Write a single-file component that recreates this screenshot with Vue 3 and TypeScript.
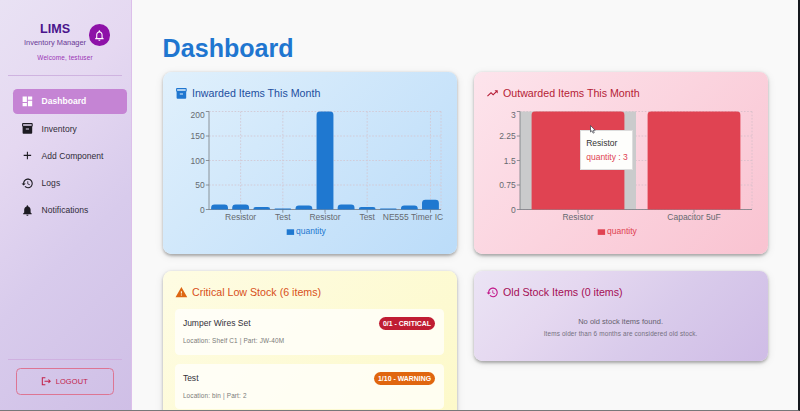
<script setup lang="ts">
interface Bar { name: string; quantity: number; label?: string; labelX?: number }
interface ChartDef {
  id: string
  title: string
  color: string
  grid: string
  max: number
  ticks: number[]
  radius: number
  icon: string
  bars: Bar[]
}

const icons = {
  dashboard: 'M3 13h8V3H3v10zm0 8h8v-6H3v6zm10 0h8V11h-8v10zm0-18v6h8V3h-8z',
  inventory: 'M20 2H4c-1 0-2 .9-2 2v3.01c0 .72.43 1.34 1 1.69V20c0 1.1 1.1 2 2 2h14c.9 0 2-.9 2-2V8.7c.57-.35 1-.97 1-1.69V4c0-1.1-1-2-2-2zm-5 12H9v-2h6v2zm5-7H4V4h16v3z',
  add: 'M19 13h-6v6h-2v-6H5v-2h6V5h2v6h6v2z',
  history: 'M13 3c-4.97 0-9 4.03-9 9H1l3.89 3.89.07.14L9 12H6c0-3.87 3.13-7 7-7s7 3.13 7 7-3.13 7-7 7c-1.93 0-3.68-.79-4.94-2.06l-1.42 1.42C8.27 19.99 10.51 21 13 21c4.97 0 9-4.03 9-9s-4.03-9-9-9zm-1 5v5l4.28 2.54.72-1.21-3.5-2.08V8H12z',
  bell: 'M12 22c1.1 0 2-.9 2-2h-4c0 1.1.89 2 2 2zm6-6v-5c0-3.07-1.64-5.64-4.5-6.32V4c0-.83-.67-1.5-1.5-1.5s-1.5.67-1.5 1.5v.68C7.63 5.36 6 7.92 6 11v5l-2 2v1h16v-1l-2-2z',
  bellOutline: 'M12 22c1.1 0 2-.9 2-2h-4c0 1.1.9 2 2 2zm6-6v-5c0-3.07-1.63-5.64-4.5-6.32V4c0-.83-.67-1.5-1.5-1.5s-1.5.67-1.5 1.5v.68C7.64 5.36 6 7.92 6 11v5l-2 2v1h16v-1l-2-2zm-2 1H8v-6c0-2.48 1.51-4.5 4-4.5s4 2.02 4 4.5v6z',
  trend: 'm16 6 2.29 2.29-4.88 4.88-4-4L2 16.59 3.41 18l6-6 4 4 6.3-6.29L22 12V6z',
  warning: 'M1 21h22L12 2 1 21zm12-3h-2v-2h2v2zm0-4h-2v-4h2v4z',
}

const nav = [
  { name: 'Dashboard', icon: icons.dashboard, active: true },
  { name: 'Inventory', icon: icons.inventory, active: false },
  { name: 'Add Component', icon: icons.add, active: false },
  { name: 'Logs', icon: icons.history, active: false },
  { name: 'Notifications', icon: icons.bell, active: false },
]

const charts: ChartDef[] = [
  {
    id: 'inward', title: 'Inwarded Items This Month', color: '#1f78d0', grid: '#d3c8d4',
    max: 200, ticks: [200, 150, 100, 50, 0], radius: 3.4, icon: icons.inventory,
    bars: [
      { name: 'a', quantity: 10 },
      { name: 'b', quantity: 10, label: 'Resistor' },
      { name: 'c', quantity: 5 },
      { name: 'd', quantity: 2, label: 'Test' },
      { name: 'e', quantity: 8 },
      { name: 'f', quantity: 200, label: 'Resistor' },
      { name: 'g', quantity: 10 },
      { name: 'h', quantity: 5, label: 'Test' },
      { name: 'i', quantity: 2 },
      { name: 'j', quantity: 8 },
      { name: 'k', quantity: 20, label: 'NE555 Timer IC', labelX: 238 },
    ],
  },
  {
    id: 'outward', title: 'Outwarded Items This Month', color: '#e04352', grid: '#d9bfcb',
    max: 3, ticks: [3, 2.25, 1.5, 0.75, 0], radius: 3.4, icon: icons.trend,
    bars: [
      { name: 'a', quantity: 3, label: 'Resistor' },
      { name: 'b', quantity: 3, label: 'Capacitor 5uF' },
    ],
  },
]

const left = 34
const right = 266
const top = 6.5
const bottom = 104.5

const y = (c: ChartDef, v: number) => bottom - (v / c.max) * (bottom - top)
const band = (c: ChartDef) => (right - left) / c.bars.length
const mid = (c: ChartDef, i: number) => left + band(c) * (i + 0.5)

function barPath(c: ChartDef, i: number): string {
  const w = band(c) * 0.8
  const x = mid(c, i) - w / 2
  const t = y(c, c.bars[i].quantity)
  const r = Math.min(c.radius, bottom - t)
  return `M${x} ${bottom}V${t + r}Q${x} ${t} ${x + r} ${t}H${x + w - r}Q${x + w} ${t} ${x + w} ${t + r}V${bottom}Z`
}

const stock = [
  { name: 'Jumper Wires Set', detail: 'Location: Shelf C1 | Part: JW-40M', chip: '0/1 - CRITICAL', level: 'critical' },
  { name: 'Test', detail: 'Location: bin | Part: 2', chip: '1/10 - WARNING', level: 'warning' },
]
</script>

<template>
  <div class="app">
    <aside class="sidebar">
      <header class="brand">
        <div class="brand-text">
          <div class="logo">LIMS</div>
          <div class="sub">Inventory Manager</div>
        </div>
        <div class="bell"><svg viewBox="0 0 24 24"><path :d="icons.bellOutline" /></svg></div>
      </header>
      <div class="welcome">Welcome, testuser</div>
      <nav class="nav">
        <a v-for="n in nav" :key="n.name" class="nav-item" :class="{ active: n.active }">
          <svg viewBox="0 0 24 24"><path :d="n.icon" /></svg>
          <span>{{ n.name }}</span>
        </a>
      </nav>
      <footer class="foot">
        <button class="logout">
          <svg viewBox="0 0 24 24" fill="none" stroke="currentColor" stroke-width="2.4">
            <path d="M10 4H3v16h7M8 12h13M17 8l4 4-4 4" />
          </svg>
          <span>LOGOUT</span>
        </button>
      </footer>
    </aside>

    <main class="main">
      <h1>Dashboard</h1>
      <div class="grid">
        <section v-for="c in charts" :key="c.id" class="card chart-card" :class="c.id">
          <h2><svg viewBox="0 0 24 24"><path :d="c.icon" /></svg>{{ c.title }}</h2>
          <div class="plot">
            <svg class="chart" width="268" height="136" viewBox="0 0 268 136">
              <g :stroke="c.grid" stroke-dasharray="1.6 1.6" stroke-width="0.9" fill="none">
                <line v-for="t in c.ticks" :key="t" :x1="left" :x2="right" :y1="y(c, t)" :y2="y(c, t)" />
                <template v-for="(b, i) in c.bars" :key="i">
                  <line v-if="b.label" :x1="mid(c, i)" :x2="mid(c, i)" :y1="top" :y2="bottom" />
                </template>
                <line :x1="right" :x2="right" :y1="top" :y2="bottom" />
              </g>
              <rect v-if="c.id === 'outward'" :x="left" :y="top" :width="band(c)" :height="bottom - top" fill="#cacbcc" />
              <g stroke="#777b82" stroke-width="0.8">
                <line :x1="left" :x2="right" :y1="bottom" :y2="bottom" />
                <line :x1="left" :x2="left" :y1="top" :y2="bottom" />
                <line v-for="t in c.ticks" :key="t" :x1="left - 3.2" :x2="left" :y1="y(c, t)" :y2="y(c, t)" />
                <template v-for="(b, i) in c.bars" :key="i">
                  <line v-if="b.label" :x1="mid(c, i)" :x2="mid(c, i)" :y1="bottom" :y2="bottom + 3.2" />
                </template>
              </g>
              <path v-for="(b, i) in c.bars" :key="i" :d="barPath(c, i)" :fill="c.color" />
              <g class="axis">
                <text v-for="t in c.ticks" :key="t" :x="left - 4.3" :y="y(c, t) + (t === c.max ? 6.6 : 3.2)" text-anchor="end">{{ t }}</text>
                <template v-for="(b, i) in c.bars" :key="i">
                  <text v-if="b.label" :x="b.labelX ?? mid(c, i)" :y="bottom + 10.2" text-anchor="middle">{{ b.label }}</text>
                </template>
              </g>
              <rect x="111.7" y="124.3" width="7.4" height="5.6" :fill="c.color" />
              <text class="legend" x="121" y="129.4" :fill="c.color">quantity</text>
            </svg>
            <template v-if="c.id === 'outward'">
              <div class="tooltip">
                <div>Resistor</div>
                <div class="value">quantity : 3</div>
              </div>
              <svg class="pointer" viewBox="0 0 12 18"><path d="M1 1v13l3-2.7 2.1 5 2.4-1-2.1-4.8h4z" /></svg>
            </template>
          </div>
        </section>

        <section class="card low">
          <h2><svg viewBox="0 0 24 24"><path :d="icons.warning" /></svg>Critical Low Stock (6 items)</h2>
          <div v-for="s in stock" :key="s.name" class="item">
            <div class="item-head">
              <span class="item-name">{{ s.name }}</span>
              <span class="chip" :class="s.level">{{ s.chip }}</span>
            </div>
            <div class="detail">{{ s.detail }}</div>
          </div>
        </section>

        <section class="card old">
          <h2><svg viewBox="0 0 24 24"><path :d="icons.history" /></svg>Old Stock Items (0 items)</h2>
          <p class="empty">No old stock items found.</p>
          <p class="hint">Items older than 6 months are considered old stock.</p>
        </section>
      </div>
    </main>
  </div>
</template>

<style>
body { margin: 0; overflow: hidden; }
</style>

<style scoped>
* { box-sizing: border-box; }
.app {
  display: flex;
  width: 800px;
  height: 411px;
  overflow: hidden;
  background: #f9f9f9;
  border-right: 2px solid #15181d;
  border-bottom: 1px solid #77777a;
  font-family: "Liberation Sans", Arial, sans-serif;
  color: #33313a;
}
svg { display: block; fill: currentColor; flex: none; }

.sidebar {
  display: flex;
  flex-direction: column;
  width: 132px;
  flex: none;
  padding: 22px 8px 15.5px;
  border-right: 1px solid #dcbfea;
  background: linear-gradient(135deg, #e9e2f4 0%, #e5d8f1 30%, #d8cbec 60%, #cfbfe6 100%);
}
.brand { display: flex; justify-content: center; align-items: center; gap: 3px; padding-left: 3.5px; height: 26px; }
.brand-text { text-align: center; }
.logo { font-size: 12.6px; line-height: 15px; font-weight: 700; color: #4a148c; }
.sub { font-size: 7.45px; line-height: 11px; color: #6a3a96; white-space: nowrap; }
.bell {
  display: grid;
  place-items: center;
  width: 21.4px;
  height: 21.4px;
  border-radius: 50%;
  background: #8e12a8;
  color: #fff;
}
.bell svg { width: 12.8px; height: 12.8px; }
.welcome {
  height: 28px;
  margin-right: 1px;
  padding-top: 5px;
  border-bottom: 1px solid #cfb3e0;
  text-align: center;
  font-size: 6.4px;
  line-height: 10px;
  letter-spacing: 0.15px;
  color: #9a35b5;
}
.nav { display: flex; flex-direction: column; gap: 2px; padding: 12.6px 0 0 4.6px; margin-right: -4px; }
.nav-item {
  display: flex;
  align-items: center;
  gap: 8.2px;
  height: 25.3px;
  padding-left: 8px;
  border-radius: 4.3px;
  font-size: 8.53px;
  letter-spacing: 0.03px;
  color: #302c38;
}
.nav-item svg { width: 12.8px; height: 12.8px; color: #1d1b22; }
.nav-item.active { background: #c584d4; color: #fff; font-weight: 700; }
.nav-item.active svg { color: #fff; }
.foot { margin-top: auto; margin-right: 1px; padding: 8px 8.4px 0; border-top: 1px solid #cfb0e0; }
.logout {
  display: flex;
  align-items: center;
  justify-content: center;
  gap: 3.8px;
  width: 98px;
  height: 27px;
  padding: 0 1.5px 0 0;
  border: 1px solid #dd7593;
  border-radius: 4.5px;
  background: transparent;
  font-family: inherit;
  font-size: 7.47px;
  letter-spacing: 0.12px;
  color: #c2224a;
}
.logout svg { width: 10.5px; height: 10.5px; fill: none; }

.main { flex: 1; min-width: 0; padding: 33px 0 0 30.6px; }
h1 { margin: 0 0 9px; font-size: 25.1px; line-height: 30px; font-weight: 700; color: #1f76d0; }
.grid { display: grid; grid-template-columns: 294.4px 294.4px; column-gap: 16.6px; row-gap: 17px; align-items: start; }
.card {
  padding: 13px 13px 13px 12.6px;
  border-radius: 8.5px;
  box-shadow: 0 1.5px 3px rgba(0, 0, 0, 0.28), 0 2px 9px rgba(0, 0, 0, 0.1);
}
.card h2 {
  display: flex;
  align-items: center;
  gap: 4px;
  height: 16px;
  margin: 0;
  font-size: 10.66px;
  font-weight: 400;
  white-space: nowrap;
}
.card h2 svg { width: 12.8px; height: 12.8px; }
.chart-card { height: 182px; }
.inward { background: linear-gradient(135deg, #e0f0fc, #bbdcf9); }
.inward h2 { color: #1d4f9e; }
.inward h2 svg { color: #1f76d0; }
.outward { background: linear-gradient(135deg, #fde4ec, #f9c3d1); }
.outward h2 { color: #b51c35; }
.plot { position: relative; margin-top: 4.4px; }
.chart { overflow: visible; }
.inward .chart { margin-left: -0.4px; }
.axis { font-size: 8.5px; fill: #666a70; }
.legend { font-size: 8.53px; }
.tooltip {
  position: absolute;
  left: 94px;
  top: 25px;
  width: 53px;
  height: 40px;
  padding: 4.4px 5px 0;
  border: 0.5px solid #ddd;
  background: #fefefc;
  font-size: 8.53px;
  line-height: 14.3px;
  white-space: nowrap;
  color: #333;
}
.tooltip .value { color: #e04352; }
.pointer {
  position: absolute;
  left: 103.4px;
  top: 20px;
  width: 6px;
  height: 9px;
  overflow: visible;
  fill: #fff;
  stroke: #3c3c48;
  stroke-width: 1.4px;
}

.low { height: 260px; background: linear-gradient(135deg, #fefce3 0%, #fdfad0 60%, #fdf8c2 100%); }
.low h2 { color: #d8501a; }
.low h2 svg { color: #dd6612; }
.item {
  height: 45.8px;
  margin-top: 8.9px;
  padding: 8px 8.5px 0 7.7px;
  border-radius: 4.3px;
  background: rgba(255, 255, 255, 0.72);
}
.item-head { display: flex; align-items: center; justify-content: space-between; height: 13px; }
.item-name { font-size: 8.53px; color: #33313a; }
.chip {
  height: 13px;
  padding: 0 4.4px;
  border-radius: 6.5px;
  font-size: 6.93px;
  line-height: 13px;
  font-weight: 700;
  color: #fff;
}
.critical { background: #c01d33; }
.warning { background: #e0660f; }
.detail { margin-top: 6px; font-size: 6.4px; line-height: 10px; letter-spacing: 0.15px; color: #7a7a78; }

.old { height: 90px; background: linear-gradient(135deg, #ebe4f5 0%, #e5d8f0 30%, #d9cbeb 60%, #cfbce6 100%); }
.old h2 { color: #a50d55; }
.old h2 svg { color: #c2188a; }
.old p { margin: 0; text-align: center; }
.empty { padding-top: 16px; font-size: 7.47px; line-height: 11px; letter-spacing: 0.04px; color: #65606e; }
.hint { padding-top: 2px; font-size: 6.4px; line-height: 10px; letter-spacing: 0.14px; color: #75707e; }
</style>
